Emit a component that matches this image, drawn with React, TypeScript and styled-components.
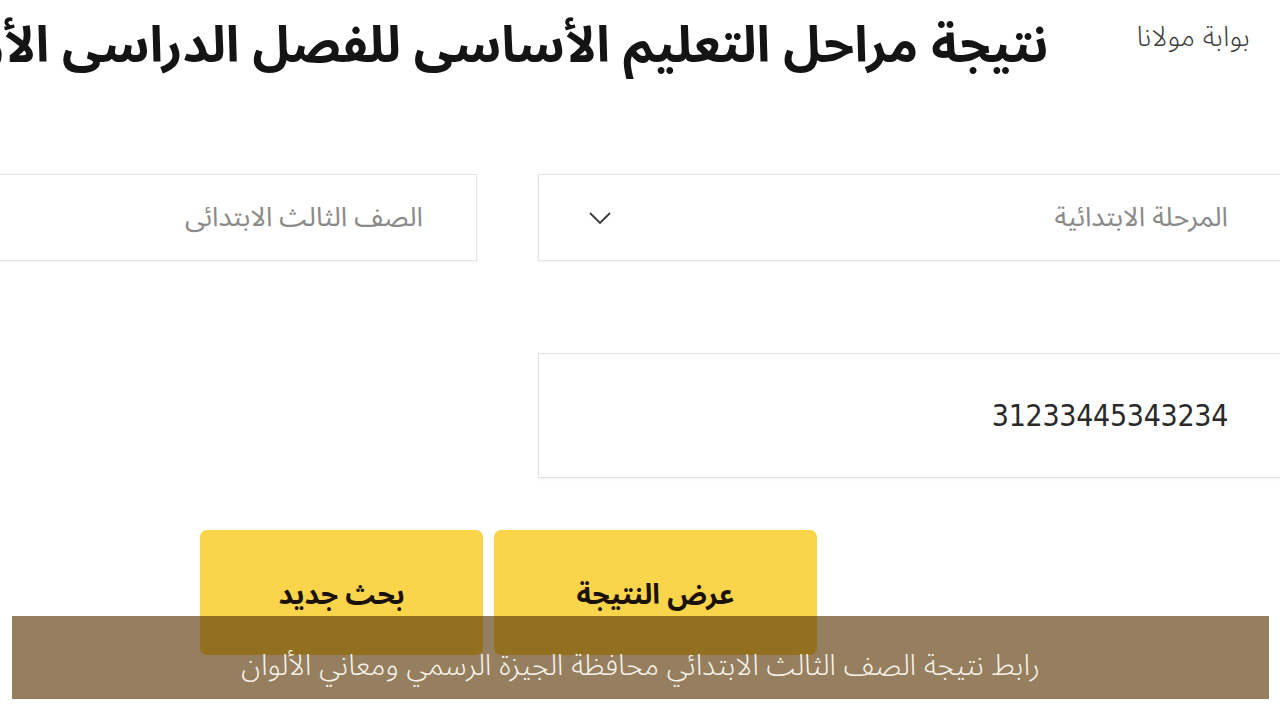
import React from 'react';
import styled, { createGlobalStyle } from 'styled-components';

const yellow = '#fad44b';
const line = '#e3e3e3';

const GlobalStyle = createGlobalStyle`
    html, body {
        margin: 0;
        padding: 0;
        background: #ffffff;
        overflow: hidden;
    }
    body {
        font-family: "Noto Sans Arabic", "DejaVu Sans", sans-serif;
    }
`

const Page = styled.div`
    position: relative;
    width: 1280px;
    height: 720px;
    overflow: hidden;
    direction: rtl;
    background: #ffffff;
`

const Header = styled.header`
    display: flex;
    align-items: center;
    gap: 88px;
    height: 92px;
    padding-right: 30px;
`

const Brand = styled.span`
    flex: none;
    font-size: 28px;
    font-weight: 300;
    color: #3d3d3d;
    margin-top: -18px;
`

const Title = styled.h1`
    flex: 1;
    min-width: 0;
    margin: 0;
    font-size: 50px;
    font-weight: 700;
    line-height: 1.3;
    color: #141414;
    white-space: nowrap;
    overflow: hidden;
`

const Form = styled.div`
    display: flex;
    flex-direction: column;
    margin-top: 82px;
    margin-right: -2px;
`

const Row = styled.div<{ $top?: number }>`
    display: grid;
    grid-template-columns: 744px 520px;
    column-gap: 61px;
    margin-top: ${p => p.$top ?? 0}px;
`

const Field = styled.div<{ $tall?: boolean }>`
    display: flex;
    align-items: center;
    justify-content: space-between;
    height: ${p => (p.$tall ? 123 : 85)}px;
    padding: 0 53px 0 50px;
    border: 1px solid ${line};
    box-shadow: 0 1px 3px rgba(0, 0, 0, 0.05);
    background: #ffffff;
`

const Placeholder = styled.span`
    font-size: 27px;
    color: #8a8a8a;
`

const Number = styled.span`
    font-family: "DejaVu Sans Condensed", "DejaVu Sans", sans-serif;
    font-stretch: condensed;
    font-size: 30px;
    color: #2a2a2a;
    letter-spacing: -0.3px;
`

const Chevron = styled.svg`
    width: 24px;
    height: 14px;
    margin-left: -1px;
`

const Actions = styled.div`
    display: flex;
    gap: 11px;
    margin-top: 52px;
    padding-right: 465px;
`

const Action = styled.button<{ $w: number }>`
    width: ${p => p.$w}px;
    height: 125px;
    padding: 6px 0 0;
    border: none;
    border-radius: 7px;
    background: ${yellow};
    font-family: "Noto Sans Arabic", "DejaVu Sans", sans-serif;
    font-size: 28px;
    font-weight: 700;
    color: #1a1206;
    cursor: pointer;
`

const Caption = styled.div`
    position: absolute;
    left: 12px;
    right: 11px;
    top: 616px;
    height: 83px;
    display: flex;
    align-items: center;
    justify-content: center;
    padding-top: 16px;
    box-sizing: border-box;
    background: rgba(92, 59, 8, 0.65);
    color: #f7f3ea;
    font-size: 29px;
    font-weight: 300;
`

const App: React.FC = () => {
    return (
        <Page>
            <GlobalStyle />
            <Header>
                <Brand>بوابة مولانا</Brand>
                <Title>نتيجة مراحل التعليم الأساسى للفصل الدراسى الأول</Title>
            </Header>
            <Form>
                <Row>
                    <Field>
                        <Placeholder>المرحلة الابتدائية</Placeholder>
                        <Chevron viewBox="0 0 24 14">
                            <polyline points="2,2 12,12 22,2" fill="none" stroke="#3a3a3a" strokeWidth="1.8" />
                        </Chevron>
                    </Field>
                    <Field>
                        <Placeholder>الصف الثالث الابتدائى</Placeholder>
                    </Field>
                </Row>
                <Row $top={92}>
                    <Field $tall>
                        <Number>31233445343234</Number>
                    </Field>
                </Row>
                <Actions>
                    <Action $w={323}>عرض النتيجة</Action>
                    <Action $w={283}>بحث جديد</Action>
                </Actions>
            </Form>
            <Caption>رابط نتيجة الصف الثالث الابتدائي محافظة الجيزة الرسمي ومعاني الألوان</Caption>
        </Page>
    )
}

export default App
